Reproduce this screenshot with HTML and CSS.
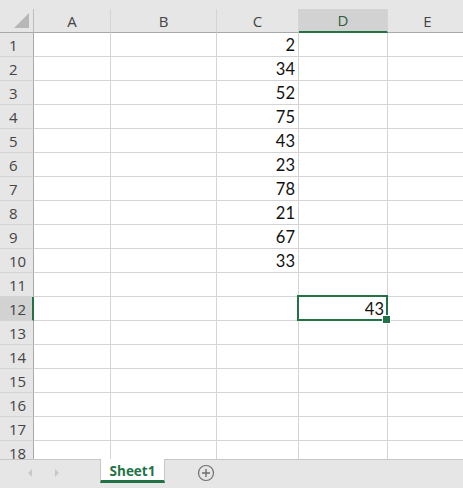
FILE: index.html
```html
<!DOCTYPE html>
<html>
<head>
<meta charset="utf-8">
<link rel="stylesheet" href="styles.css">
</head>
<body>
<div class="app">
  <div class="topstrip"></div>
  <div class="sheet">
    <div class="grid">
      <div class="hd corner"><svg width="17" height="17" viewBox="0 0 17 17"><polygon points="1,16 16,1 16,16" fill="#b7b7b7"/></svg></div>
      <div class="hd col">A</div>
      <div class="hd col">B</div>
      <div class="hd col">C</div>
      <div class="hd col sel-col">D</div>
      <div class="hd col">E</div>

      <div class="hd row">1</div><div class="c"></div><div class="c"></div><div class="c num">2</div><div class="c"></div><div class="c"></div>
      <div class="hd row">2</div><div class="c"></div><div class="c"></div><div class="c num">34</div><div class="c"></div><div class="c"></div>
      <div class="hd row">3</div><div class="c"></div><div class="c"></div><div class="c num">52</div><div class="c"></div><div class="c"></div>
      <div class="hd row">4</div><div class="c"></div><div class="c"></div><div class="c num">75</div><div class="c"></div><div class="c"></div>
      <div class="hd row">5</div><div class="c"></div><div class="c"></div><div class="c num">43</div><div class="c"></div><div class="c"></div>
      <div class="hd row">6</div><div class="c"></div><div class="c"></div><div class="c num">23</div><div class="c"></div><div class="c"></div>
      <div class="hd row">7</div><div class="c"></div><div class="c"></div><div class="c num">78</div><div class="c"></div><div class="c"></div>
      <div class="hd row">8</div><div class="c"></div><div class="c"></div><div class="c num">21</div><div class="c"></div><div class="c"></div>
      <div class="hd row">9</div><div class="c"></div><div class="c"></div><div class="c num">67</div><div class="c"></div><div class="c"></div>
      <div class="hd row">10</div><div class="c"></div><div class="c"></div><div class="c num">33</div><div class="c"></div><div class="c"></div>
      <div class="hd row">11</div><div class="c"></div><div class="c"></div><div class="c"></div><div class="c"></div><div class="c"></div>
      <div class="hd row sel-row">12</div><div class="c"></div><div class="c"></div><div class="c"></div><div class="c num active">43</div><div class="c"></div>
      <div class="hd row">13</div><div class="c"></div><div class="c"></div><div class="c"></div><div class="c"></div><div class="c"></div>
      <div class="hd row">14</div><div class="c"></div><div class="c"></div><div class="c"></div><div class="c"></div><div class="c"></div>
      <div class="hd row">15</div><div class="c"></div><div class="c"></div><div class="c"></div><div class="c"></div><div class="c"></div>
      <div class="hd row">16</div><div class="c"></div><div class="c"></div><div class="c"></div><div class="c"></div><div class="c"></div>
      <div class="hd row">17</div><div class="c"></div><div class="c"></div><div class="c"></div><div class="c"></div><div class="c"></div>
      <div class="hd row">18</div><div class="c"></div><div class="c"></div><div class="c"></div><div class="c"></div><div class="c"></div>
    </div>
  </div>
  <div class="tabbar">
    <div class="nav">
      <svg width="8" height="10" viewBox="0 0 8 10"><polygon points="6,1 2,5 6,9" fill="#c8c8c8"/></svg>
      <svg width="8" height="10" viewBox="0 0 8 10"><polygon points="2,1 6,5 2,9" fill="#c8c8c8"/></svg>
    </div>
    <div class="tab">Sheet1</div>
    <div class="add">
      <svg width="18" height="18" viewBox="0 0 18 18"><circle cx="9" cy="9" r="7.5" fill="none" stroke="#6f6f6f" stroke-width="1.2"/><path d="M9 5v8M5 9h8" stroke="#6f6f6f" stroke-width="1.4"/></svg>
    </div>
  </div>
</div>
</body>
</html>
```

FILE: styles.css
```css
* { box-sizing: border-box; }
html, body { margin: 0; padding: 0; background: #ffffff; }
.app {
  width: 463px;
  height: 488px;
  display: flex;
  flex-direction: column;
  overflow: hidden;
  font-family: "Open Sans", "Noto Sans", sans-serif;
}
.topstrip { height: 9px; background: #e6e6e6; flex: none; }
.sheet { height: 450px; overflow: hidden; flex: none; }
.grid {
  display: grid;
  grid-template-columns: 34px 77px 106px 82px 89px 80px;
  grid-auto-rows: 24px;
}
.hd {
  background: #e6e6e6;
  color: #444444;
  font-size: 15px;
  border-right: 1px solid #cfcfcf;
  border-bottom: 1px solid #bdbdbd;
  display: flex;
  align-items: center;
}
.hd.col { justify-content: center; border-right: 1px solid #d4d4d4; border-bottom: 1px solid #a9a9a9; }
.hd.corner { justify-content: flex-end; align-items: flex-end; padding: 0 3px 3px 0; border-right: 1px solid #bdbdbd; border-bottom: 1px solid #a9a9a9; }
.hd.corner svg { display: block; }
.hd.row { padding-left: 9px; border-right: 1px solid #a9a9a9; border-bottom: 1px solid #d4d4d4; }
.sel-col { background: #d2d2d2; color: #2e5c42; border-bottom: 2px solid #217346 !important; }
.sel-row { background: #d2d2d2; border-right: 2px solid #217346 !important; }
.c {
  border-right: 1px solid #d4d4d4;
  border-bottom: 1px solid #d4d4d4;
  font-family: "Lato", "Open Sans", sans-serif;
  font-size: 16.5px;
  color: #111111;
  display: flex;
  align-items: center;
  justify-content: flex-end;
  padding: 1px 3px 0 0;
}
.active { position: relative; }
.active::before {
  content: "";
  position: absolute;
  top: -2px; left: -2px; right: -1px; bottom: -1px;
  border: 2px solid #217346;
}
.active::after {
  content: "";
  position: absolute;
  right: -4px; bottom: -4px;
  width: 7px; height: 7px;
  background: #217346;
  border: 1px solid #ffffff;
}
.tabbar {
  flex: 1;
  background: #e6e6e6;
  border-top: 1px solid #c6c6c6;
  display: flex;
  align-items: flex-start;
}
.nav {
  width: 100px;
  height: 26px;
  display: flex;
  align-items: center;
  padding-left: 26px;
  gap: 19px;
}
.nav svg { display: block; }
.tab {
  width: 65px;
  height: 24px;
  margin-top: -1px;
  background: #ffffff;
  border-left: 1px solid #c6c6c6;
  border-right: 1px solid #c6c6c6;
  border-bottom: 3px solid #217346;
  color: #217346;
  font-weight: 700;
  font-size: 13.5px;
  display: flex;
  align-items: center;
  justify-content: center;
  padding-top: 2px;
}
.add {
  height: 26px;
  margin-left: 32px;
  display: flex;
  align-items: center;
}
.add svg { display: block; }
```
